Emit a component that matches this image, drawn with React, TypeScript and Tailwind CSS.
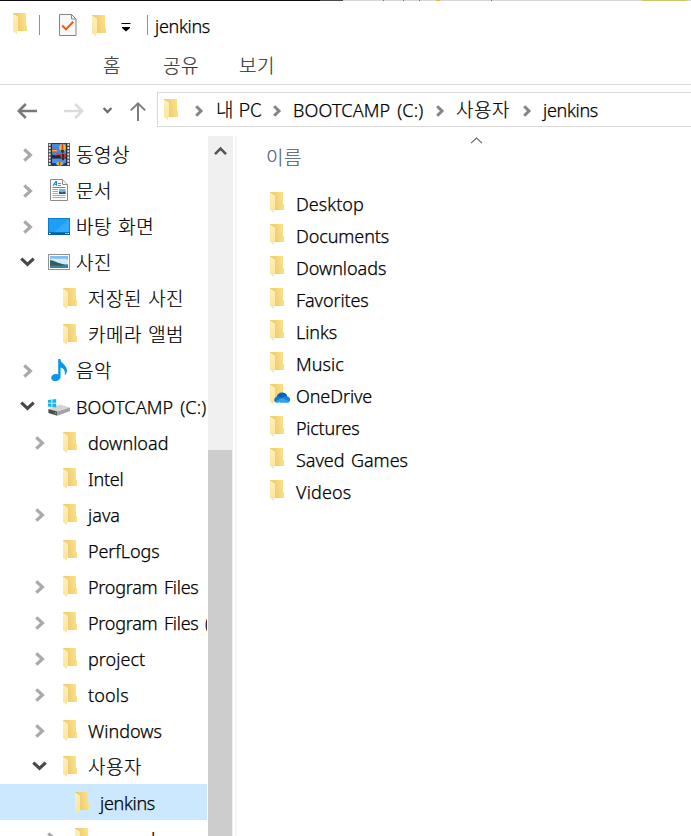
import type { ReactNode } from "react";

const LATIN = "font-['Noto_Sans','Noto_Sans_CJK_KR',sans-serif] text-[18px] font-light [-webkit-text-stroke:0.25px]";
const KOREAN = "font-['Noto_Sans_CJK_KR','Noto_Sans',sans-serif] text-[19px] font-light [-webkit-text-stroke:0.2px] [word-spacing:1.5px]";

const TRACKING: Record<string, string> = {
  jenkins: "tracking-[-0.3px]",
  Pictures: "tracking-[-0.25px]",
  Documents: "tracking-[-0.1px]",
  Downloads: "tracking-[-0.05px]",
  Favorites: "tracking-[-0.1px]",
  Links: "tracking-[-0.1px]",
  Intel: "tracking-[-0.2px]",
  OneDrive: "tracking-[-0.1px]",
  PerfLogs: "tracking-[-0.1px]",
  "Program Files": "tracking-[-0.25px] [word-spacing:2px]",
  "Program Files (x86)": "tracking-[-0.25px] [word-spacing:2px]",
  "Saved Games": "tracking-[-0.05px] [word-spacing:2px]",
  "BOOTCAMP (C:)": "tracking-[0.15px] [word-spacing:2px]",
  Videos: "tracking-[0.15px]",
  tools: "tracking-[0.15px]",
  "내 PC": "tracking-[-0.3px]",
  ssoosd: "tracking-[-0.4px]",
};

function isKorean(text: string) {
  return /[\uac00-\ud7a3]/.test(text);
}

function Label({ text, className = "text-black" }: { text: string; className?: string }) {
  const korean = isKorean(text);
  const tracking = TRACKING[text] ?? (korean ? "tracking-[0.5px]" : "tracking-[0.03px]");
  return (
    <span className={`whitespace-pre leading-[24px] ${korean ? KOREAN : LATIN} ${tracking} ${className}`}>{text}</span>
  );
}

function Folder({ cloud = false }: { cloud?: boolean }) {
  return (
    <svg className="block h-[21px] w-[21px] shrink-0" viewBox="0 0 21 21">
      <defs>
        <linearGradient id="folder-back" x1="0" x2="1" y1="0.6" y2="0.4">
          <stop offset="0" stopColor="#e9c469" />
          <stop offset="1" stopColor="#fce28a" />
        </linearGradient>
        <linearGradient id="folder-flap" x1="0" x2="0" y1="0" y2="1">
          <stop offset="0" stopColor="#fff0b8" />
          <stop offset="1" stopColor="#fde59a" />
        </linearGradient>
      </defs>
      <path d="M0 0H13V12H14V18H3L0 16Z" fill="url(#folder-back)" />
      <path d="M0 0.6L5 3.8V17.5L4 18V21L0 18Z" fill="url(#folder-flap)" />
      {cloud && (
        <g>
          <path d="M6.5 13.5C7 10.5 9.5 8.6 12.2 8.6C14.8 8.6 16.8 10.2 17.5 12.4L12 16Z" fill="#0a62b8" />
          <path d="M4.2 16C4.2 13.8 6 12.4 8 12.4C9.5 12.4 10.8 13.2 12 14L8 18.6H6.7C5.2 18.6 4.2 17.4 4.2 16Z" fill="#1177d1" />
          <path d="M12 14.2C13.2 12.8 15 12 16.8 12.2C18.8 12.4 20.2 14 20.2 15.8C20.2 17.4 19 18.6 17.4 18.6H10Z" fill="#1583dc" />
          <path d="M5 17.6L12.3 13.8L19.4 17.7C18.9 18.3 18.2 18.6 17.4 18.6H6.7C6 18.6 5.4 18.2 5 17.6Z" fill="#2aa5ee" />
        </g>
      )}
    </svg>
  );
}

function ChevronRight() {
  return (
    <svg className="block h-[14px] w-[10px] shrink-0" viewBox="0 0 10 14" fill="none">
      <path d="M1.3 1.3L7.4 7L1.3 12.7" stroke="#a9a9a9" strokeWidth="3.2" />
    </svg>
  );
}

function ChevronDown() {
  return (
    <svg className="-ml-[3px] mb-[2px] block h-[10px] w-[15px] shrink-0" viewBox="0 0 15 10" fill="none">
      <path d="M1.3 1.6L7.5 7.4L13.7 1.6" stroke="#484848" strokeWidth="3.2" />
    </svg>
  );
}

function CrumbChevron() {
  return (
    <svg className="block h-[12px] w-[9px] shrink-0" viewBox="0 0 9 12" fill="none">
      <path d="M1.2 1.2L6 6L1.2 10.8" stroke="#858585" strokeWidth="3" />
    </svg>
  );
}

function VideoIcon() {
  return (
    <svg className="block h-[23px] w-[22px]" viewBox="0 0 22 23">
      <rect width="22" height="23" fill="#4a4a4a" />
      {[0.5, 3.7, 6.9, 10.1, 13.3, 16.5, 19.7].map((y) => (
        <g key={y} fill="#e4e4e4">
          <rect x="0.8" y={y + 0.3} width="1.8" height="2" />
          <rect x="19.4" y={y + 0.3} width="1.8" height="2" />
        </g>
      ))}
      <rect x="3.4" y="0.6" width="15.2" height="21.8" fill="#1c1c20" />
      <rect x="4" y="1" width="14" height="13.5" fill="#4488e6" />
      <path d="M4 11.5L8 12.5L12 11.5L18 13V15H4Z" fill="#222a3a" />
      <rect x="4" y="15.5" width="14" height="6.5" fill="#4b90ea" />
      <ellipse cx="14.5" cy="4.6" rx="3.1" ry="3.8" fill="#edc32a" />
      <path d="M13.6 0.9H15.4V8.2H13.6Z" fill="#dc4430" />
      <path d="M12.8 7H16.2L15.3 10H13.7Z" fill="#3a2c23" />
      <path d="M4 5.6C6 5.2 8.5 6 9.4 7.2L7.6 9.5H4Z" fill="#d14a34" />
      <path d="M4 7H9V8.4H4Z" fill="#e9b34d" />
      <path d="M8 10H12V12H8Z" fill="#cf4a3b" />
      <path d="M12 11.5C13.5 10.3 16.5 10.3 18 11.5C18 14 16.5 16 15 16.8C13.5 16 12 14 12 11.5Z" fill="#b03a4b" />
      <rect x="14.2" y="11" width="1.6" height="6.2" fill="#30241f" />
      <ellipse cx="11.6" cy="20.6" rx="3" ry="2.2" fill="#dfbd28" />
      <rect x="10.9" y="18.4" width="1.5" height="3.6" fill="#c7392b" />
      <path d="M4 20H7.5L8.5 22H4Z" fill="#283f62" />
      <path d="M15 21L18 19.6V22H15Z" fill="#283f62" />
    </svg>
  );
}

function DocumentIcon() {
  return (
    <svg className="block h-[22px] w-[18px]" viewBox="0 0 18 22">
      <path d="M0.5 0.5H12.5L17.5 5.5V21.5H0.5Z" fill="#fdfdfd" stroke="#8b8b8b" />
      <path d="M12.5 0.5V5.5H17.5" fill="#f1f1f1" stroke="#8b8b8b" />
      <path d="M3 6.8L5.8 2.6H6.6V6.8M4.2 5.2H6.6" fill="none" stroke="#2286ba" strokeWidth="1.1" />
      <path d="M8 4.5H11M8 6.5H11M2.5 8.5H15.5" stroke="#2f9bd0" />
      <path d="M2.5 10.5H8M2.5 12.5H8M2.5 14.5H8M2.5 16.5H15.5M2.5 18.5H15.5" stroke="#9ba0a4" strokeWidth="0.9" />
      <rect x="9" y="10" width="6.5" height="5" fill="#71b6e6" />
      <path d="M9 12.4L12 13.4L15.5 12.4V15H9Z" fill="#304c68" />
    </svg>
  );
}

function DesktopIcon() {
  return (
    <svg className="block h-[17px] w-[22px]" viewBox="0 0 22 17">
      <rect width="22" height="17" fill="#0773bd" />
      <rect x="0.8" y="0.8" width="20.4" height="13.4" fill="#1ca0f6" />
      <path d="M21.2 0.8V14.2H6Z" fill="#31abfa" />
      <rect y="14.6" width="22" height="2.4" fill="#07609e" />
      <path d="M1 15.5H2.5M17.5 15.5H18.5M19.5 15.5H21" stroke="#fff" />
    </svg>
  );
}

function PictureIcon() {
  return (
    <svg className="block h-[16px] w-[22px]" viewBox="0 0 22 16">
      <rect x="0.5" y="0.5" width="21" height="15" fill="#fff" stroke="#929292" />
      <rect x="2" y="2" width="18" height="12" fill="#7fbdf0" />
      <path d="M2 5C5 4 8 5 12 4.8S18 4.6 20 6V10H2Z" fill="#d5ebf9" />
      <path d="M2 6.2C4 5.8 8 8 11 9L18 11L14 12H2Z" fill="#2e5f55" />
      <path d="M2 11.2L12 11.8L20 10.6V14H2Z" fill="#3f7f9c" />
    </svg>
  );
}

function MusicIcon() {
  return (
    <svg className="block h-[22px] w-[17px]" viewBox="0 0 17 22">
      <path
        d="M7.2 0H9.4C9.6 4.4 16 6 16 11.4C16 13.4 15 15.2 13.8 16.4C14.5 12.4 13 9.6 9.6 8.6V17.4C9.6 20 7.4 22 4.4 22C2 22 0.2 20.8 0.2 18.9C0.2 16.7 2.4 15 5 15C5.9 15 6.6 15.1 7.2 15.4Z"
        fill="#0a98ee"
      />
    </svg>
  );
}

function DriveIcon() {
  return (
    <svg className="mt-[3px] block h-[17px] w-[22px]" viewBox="0 0 22 17">
      <path d="M0.4 10L12 5.6L22 8.4L9.4 12.4Z" fill="#d5d5d5" />
      <path d="M0 1.1L3.5 0.6V3.7H0ZM4.3 0.5L8.2 0V3.7H4.3ZM0 4.5H3.5V7.9L0 7.4ZM4.3 4.5H8.2V8.5L4.3 8Z" fill="#14b4f0" />
      <path d="M0.4 10L9.4 12.4V16.8L0.4 14Z" fill="#4b4d4c" />
      <path d="M9.4 12.4L22 8.4V12L9.4 16.8Z" fill="#a2a2a2" />
      <rect x="6.8" y="13.2" width="1.4" height="1.6" fill="#50d044" />
    </svg>
  );
}

type TreeNode = { text: string; level: 0 | 1 | 2; state?: "open" | "closed"; icon?: ReactNode; selected?: boolean };

const TREE: TreeNode[] = [
  { text: "동영상", level: 0, state: "closed", icon: <VideoIcon /> },
  { text: "문서", level: 0, state: "closed", icon: <DocumentIcon /> },
  { text: "바탕 화면", level: 0, state: "closed", icon: <DesktopIcon /> },
  { text: "사진", level: 0, state: "open", icon: <PictureIcon /> },
  { text: "저장된 사진", level: 1 },
  { text: "카메라 앨범", level: 1 },
  { text: "음악", level: 0, state: "closed", icon: <MusicIcon /> },
  { text: "BOOTCAMP (C:)", level: 0, state: "open", icon: <DriveIcon /> },
  { text: "download", level: 1, state: "closed" },
  { text: "Intel", level: 1 },
  { text: "java", level: 1, state: "closed" },
  { text: "PerfLogs", level: 1 },
  { text: "Program Files", level: 1, state: "closed" },
  { text: "Program Files (x86)", level: 1, state: "closed" },
  { text: "project", level: 1, state: "closed" },
  { text: "tools", level: 1, state: "closed" },
  { text: "Windows", level: 1, state: "closed" },
  { text: "사용자", level: 1, state: "open" },
  { text: "jenkins", level: 2, selected: true },
  { text: "ssoosd", level: 2, state: "closed" },
];

const INDENT = { 0: "pl-[23px]", 1: "pl-[35px]", 2: "pl-[47px]" };

function TreeRow({ node }: { node: TreeNode }) {
  return (
    <div className={`flex h-9 shrink-0 overflow-hidden ${INDENT[node.level]} ${node.selected ? "bg-[#cce8ff]" : ""}`}>
      <span className="flex h-[37px] w-[25px] shrink-0 items-center">
        {node.state === "closed" && <ChevronRight />}
        {node.state === "open" && <ChevronDown />}
      </span>
      {node.icon ? (
        <span className="flex h-9 w-[22px] shrink-0 items-center justify-center">{node.icon}</span>
      ) : (
        <span className="-mr-[3px] w-[22px] shrink-0 pl-[3px] pt-2">
          <Folder />
        </span>
      )}
      <span className={`flex shrink-0 ${node.icon ? "pl-[6px]" : "pl-[9px]"} ${isKorean(node.text) ? "pt-[6px]" : "pt-[7px]"}`}>
        <Label text={node.text} />
      </span>
    </div>
  );
}

const FILES = ["Desktop", "Documents", "Downloads", "Favorites", "Links", "Music", "OneDrive", "Pictures", "Saved Games", "Videos"];

function TitleBar() {
  return (
    <div className="flex h-[47px] items-start">
      <div className="ml-[13px] mt-3 w-[26px]">
        <Folder />
      </div>
      <div className="mt-[14px] h-5 w-px bg-[#929292]" />
      <svg className="ml-[19px] mt-[13px] block h-[22px] w-[18px]" viewBox="0 0 18 22" fill="none">
        <path d="M0.5 0.5H12.5L17 5V21.5H0.5Z" fill="#f7f7f7" stroke="#858585" />
        <path d="M12.5 0.5V5H17" stroke="#858585" />
        <path d="M3.2 11.5L7 15.4L14.2 7.8" stroke="#f05a0c" strokeWidth="2" />
      </svg>
      <div className="ml-[15px] mt-[14px] w-[29px]">
        <Folder />
      </div>
      <svg className="mt-[21px] block h-[10px] w-[10px]" viewBox="0 0 10 10">
        <path d="M0.5 1H9.5V2H0.5ZM1 5H9V6L5 9.6L1 6Z" fill="#000" />
      </svg>
      <div className="ml-[16px] mt-[14px] h-5 w-px bg-[#929292]" />
      <div className="flex pl-[7px] pt-[13px]">
        <Label text="jenkins" />
      </div>
    </div>
  );
}

function AddressBar() {
  return (
    <div className="flex h-[51px] items-start pt-[7px]">
      <svg className="ml-[17px] mt-[11px] block h-[16px] w-[20px]" viewBox="0 0 20 16" fill="none" stroke="#787878" strokeWidth="2.5">
        <path d="M20 8H2M8.8 1L1.8 8L8.8 15" />
      </svg>
      <svg className="ml-[27px] mt-[11px] block h-[16px] w-[20px]" viewBox="0 0 20 16" fill="none" stroke="#dcdcdc" strokeWidth="2.5">
        <path d="M0 8H18M11.2 1L18.2 8L11.2 15" />
      </svg>
      <svg className="ml-[19px] mt-[15px] block h-[7px] w-[9px]" viewBox="0 0 9 7" fill="none">
        <path d="M0.6 1L4.5 5L8.4 1" stroke="#6d6d6d" strokeWidth="2.4" />
      </svg>
      <svg className="ml-[18px] mt-[10px] block h-[19px] w-[16px]" viewBox="0 0 16 19" fill="none" stroke="#7d7d7d" strokeWidth="2">
        <path d="M8 19V2M0.8 8.4L8 1.4L15.2 8.4" />
      </svg>
      <div className="ml-[11px] flex h-[35px] flex-1 overflow-hidden border border-r-0 border-[#d9d9d9]">
        <div className="ml-[6px] mt-[6px] w-[31px] shrink-0">
          <Folder />
        </div>
        <div className="flex h-[35px] items-center">
          <CrumbChevron />
          <span className="w-[69px] pb-[2px] pl-[12px]"><Label text="내 PC" /></span>
          <CrumbChevron />
          <span className="w-[154px] pl-[11px]"><Label text="BOOTCAMP (C:)" /></span>
          <CrumbChevron />
          <span className="w-[78px] pb-[2px] pl-[11px]"><Label text="사용자" /></span>
          <CrumbChevron />
          <span className="pl-[11px]"><Label text="jenkins" /></span>
        </div>
      </div>
    </div>
  );
}

export default function App() {
  return (
    <div className="flex h-[836px] w-[691px] flex-col overflow-hidden bg-white">
      <div className="flex h-px shrink-0 bg-[#d6d6d6]">
        <div className="w-[320px] bg-[#0d0b0d]" />
        <div className="w-[23px] bg-[#4b4a50]" />
        <div className="ml-[40px] w-px bg-[#777]" />
        <div className="ml-[19px] w-px bg-[#777]" />
        <div className="ml-[15px] w-px bg-[#777]" />
        <div className="ml-[16px] w-[4px] bg-[#e0b84c]" />
        <div className="ml-[51px] w-px bg-[#777]" />
        <div className="ml-[150px] w-[45px] bg-[#c9c765]" />
      </div>
      <TitleBar />
      <div className="flex h-[37px] shrink-0 items-start border-b border-[#d9d9d9] pt-[5px]">
        <span className="ml-[103px] w-[60px] shrink-0"><Label text="홈" className="text-[#333]" /></span>
        <span className="w-[76px] shrink-0"><Label text="공유" className="text-[#333]" /></span>
        <span><Label text="보기" className="text-[#333]" /></span>
      </div>
      <AddressBar />
      <div className="flex h-[700px] shrink-0">
        <div className="flex w-[207px] flex-col overflow-hidden">
          {TREE.map((node) => (
            <TreeRow key={node.text} node={node} />
          ))}
        </div>
        <div className="ml-px flex w-[25px] flex-col bg-[#f0f0f0]">
          <svg className="mx-auto mt-[9px] block h-[12px] w-[13px]" viewBox="0 0 13 12" fill="none">
            <path d="M1 9.2L6.5 3.6L12 9.2" stroke="#555" strokeWidth="2.6" />
          </svg>
          <div className="mt-auto h-[386px] w-6 bg-[#cdcdcd]" />
        </div>
        <div className="ml-[2px] w-[2px] bg-[#f5f5f5]" />
        <div className="flex flex-1 flex-col">
          <svg className="ml-[233px] mt-px block h-[7px] w-[13px] shrink-0" viewBox="0 0 13 7" fill="none">
            <path d="M1 6.2L6.5 1L12 6.2" stroke="#666" strokeWidth="1.1" />
          </svg>
          <div className="flex h-[44px] shrink-0 pl-[29px] pt-px">
            <Label text="이름" className="text-[#4c607a]" />
          </div>
          {FILES.map((name) => (
            <div key={name} className="flex h-8 shrink-0 pl-[33px]">
              <div className="w-[26px] pt-1">
                <Folder cloud={name === "OneDrive"} />
              </div>
              <div className="flex pt-[4px]">
                <Label text={name} />
              </div>
            </div>
          ))}
        </div>
      </div>
    </div>
  );
}
